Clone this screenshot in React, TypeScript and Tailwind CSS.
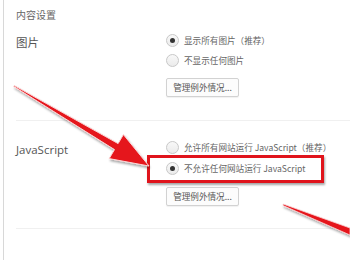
import React from 'react'

const cjk = { fontFamily: '"Noto Sans CJK SC", "Noto Sans", sans-serif' }
const latin = { fontFamily: '"Open Sans", "Noto Sans CJK SC", sans-serif' }

function Radio({ checked }: { checked?: boolean }) {
  return (
    <span className="w-[13px] h-[13px] rounded-full border border-[#c8c8c8] bg-gradient-to-b from-[#f8f8f8] to-[#ebebeb] flex items-center justify-center shrink-0">
      {checked && <span className="w-[5px] h-[5px] rounded-full bg-[#333]" />}
    </span>
  )
}

function Option({ checked, children }: { checked?: boolean; children: React.ReactNode }) {
  return (
    <div className="flex items-center gap-[5px] h-[16px]">
      <Radio checked={checked} />
      <span className="text-[8.6px] text-[#666] leading-[16px] whitespace-nowrap" style={cjk}>
        {children}
      </span>
    </div>
  )
}

function ManageButton() {
  return (
    <button
      className="w-[73px] h-[19px] border border-[#d2d2d2] bg-[#fcfcfc] rounded-[2px] shadow-[0_1px_1px_rgba(0,0,0,0.06)] text-[8.6px] text-[#555] flex items-center justify-center"
      style={cjk}
    >
      管理例外情况...
    </button>
  )
}

export default function App() {
  return (
    <div className="relative w-[350px] h-[260px] bg-white overflow-hidden pl-[3px]">
      <div className="h-full border-l border-[#d8d8d8] pl-[12px]">
        <div className="pt-[8px] text-[10px] leading-[14px] text-[#666]" style={cjk}>
          内容设置
        </div>

        {/* 图片 */}
        <div className="flex mt-[10px] pb-[23px] border-b border-[#f0f0f0]">
          <div className="w-[150px] text-[11.5px] leading-[20px] text-[#555]" style={cjk}>
            图片
          </div>
          <div className="flex flex-col">
            <Option checked>显示所有图片（推荐）</Option>
            <div className="mt-[4px]">
              <Option>不显示任何图片</Option>
            </div>
            <div className="mt-[10px]">
              <ManageButton />
            </div>
          </div>
        </div>

        {/* JavaScript */}
        <div className="flex pt-[18px] pb-[22px] border-b border-[#f0f0f0]">
          <div className="w-[150px] mt-[1px] text-[11.5px] leading-[20px] text-[#555]" style={latin}>
            JavaScript
          </div>
          <div className="flex flex-col">
            <Option>允许所有网站运行 JavaScript（推荐）</Option>
            <div className="mt-[5px]">
              <Option checked>不允许任何网站运行 JavaScript</Option>
            </div>
            <div className="mt-[11px]">
              <ManageButton />
            </div>
          </div>
        </div>
      </div>

      {/* red highlight box */}
      <div className="absolute left-[147px] top-[155px] w-[177px] h-[28px] border-[3px] border-[#e0141c] shadow-[1px_2px_2px_rgba(0,0,0,0.35)]" />

      {/* arrows */}
      <svg className="absolute inset-0 pointer-events-none" width="350" height="260" viewBox="0 0 350 260">
        <defs>
          <filter id="sh" x="-10%" y="-10%" width="130%" height="130%">
            <feDropShadow dx="1" dy="2" stdDeviation="1.2" floodColor="#000" floodOpacity="0.35" />
          </filter>
        </defs>
        <polygon
          points="14.3,85.6 118.1,143.6 123.4,134.6 149,166 109.2,158.6 114.5,149.6 13.7,86.4"
          fill="#e5131b"
          stroke="#fbd5d5"
          strokeWidth="1"
          strokeLinejoin="round"
          filter="url(#sh)"
        />
        <polygon
          points="283,204 350,228 350,235 283,205.5"
          fill="#e5131b"
          stroke="#fbd5d5"
          strokeWidth="0.8"
          filter="url(#sh)"
        />
      </svg>
    </div>
  )
}
